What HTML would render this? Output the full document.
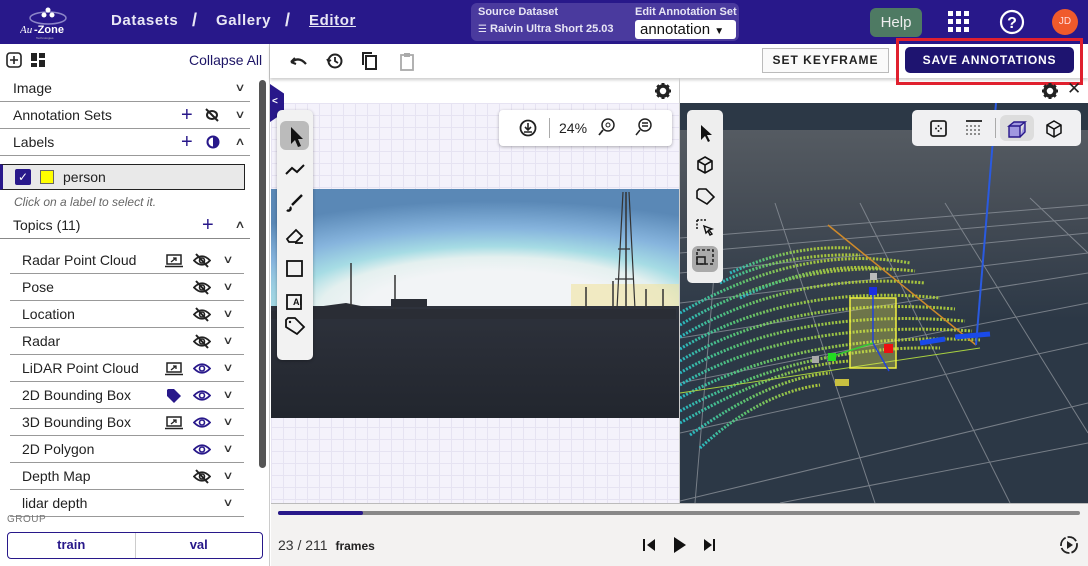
<!DOCTYPE html>
<html><head><meta charset="utf-8">
<style>
*{box-sizing:border-box;margin:0;padding:0}
body{width:1088px;height:566px;overflow:hidden;font-family:"Liberation Sans","DejaVu Sans",sans-serif;background:#fff;position:relative;color:#222}
.abs{position:absolute}
#hdr{left:0;top:0;width:1088px;height:44px;background:#28188a}
.nav{color:#e8e6f5;font-size:15px;font-weight:bold;letter-spacing:.6px;top:12px}
#side{left:0;top:44px;width:270px;height:522px;background:#fff;border-right:1px solid #ccc}
.row{position:absolute;left:0;width:250px;height:27px;border-bottom:1.5px solid #999;font-size:14px;line-height:26px;padding-left:13px}
.trow{position:absolute;left:10px;width:234px;height:27px;border-bottom:1.5px solid #999;font-size:14px;line-height:26px;padding-left:12px}
.chev{position:absolute;font-size:11px;color:#333;transform:scaleX(1.4)}
.ico{position:absolute}
</style></head><body>
<div id="hdr" class="abs">
  <div class="abs" style="left:20px;top:4px;width:52px;height:36px">
    <svg width="52" height="36"><ellipse cx="28" cy="14" rx="18" ry="6" fill="none" stroke="#8c86c8" stroke-width="1.5"/><circle cx="28" cy="6" r="2.5" fill="#fff"/><circle cx="24" cy="11" r="2.5" fill="#fff"/><circle cx="32" cy="11" r="2.5" fill="#fff"/>
    <text x="0" y="29" fill="#fff" font-size="11" font-style="italic" font-family="Liberation Serif">Au</text><text x="14" y="29" fill="#fff" font-size="11" font-weight="bold">-Zone</text><text x="16" y="35" fill="#bbb" font-size="3">Technologies</text></svg>
  </div>
  <div class="abs nav" style="left:111px">Datasets</div>
  <div class="abs nav" style="left:192px;font-size:18px;top:10px">/</div>
  <div class="abs nav" style="left:216px">Gallery</div>
  <div class="abs nav" style="left:285px;font-size:18px;top:10px">/</div>
  <div class="abs nav" style="left:309px;text-decoration:underline">Editor</div>
  <div class="abs" style="left:471px;top:3px;width:268px;height:38px;background:#4a3a9e;border-radius:6px"></div>
  <div class="abs" style="left:478px;top:6px;color:#e8e6f5;font-size:11px;font-weight:bold">Source Dataset</div>
  <div class="abs" style="left:478px;top:23px;color:#e8e6f5;font-size:11px;font-weight:bold"><span style="font-size:10px">&#9776;</span> Raivin Ultra Short 25.03</div>
  <div class="abs" style="left:635px;top:6px;color:#e8e6f5;font-size:11px;font-weight:bold">Edit Annotation Set</div>
  <div class="abs" style="left:635px;top:20px;width:101px;height:19px;background:#fff;border-radius:3px;font-size:15px;line-height:19px;padding-left:5px;color:#111">annotation <span style="font-size:10px">&#9660;</span></div>
  <div class="abs" style="left:870px;top:8px;width:52px;height:29px;background:#4e7a63;border-radius:6px;color:#eee;font-size:15px;line-height:29px;text-align:center">Help</div>
  <svg class="abs" style="left:948px;top:11px" width="22" height="22"><g fill="#fff"><rect x="0" y="0" width="5" height="5"/><rect x="8" y="0" width="5" height="5"/><rect x="16" y="0" width="5" height="5"/><rect x="0" y="8" width="5" height="5"/><rect x="8" y="8" width="5" height="5"/><rect x="16" y="8" width="5" height="5"/><rect x="0" y="16" width="5" height="5"/><rect x="8" y="16" width="5" height="5"/><rect x="16" y="16" width="5" height="5"/></g></svg>
  <svg class="abs" style="left:999px;top:9px" width="26" height="26"><circle cx="13" cy="13" r="11" fill="none" stroke="#fff" stroke-width="2.2"/><text x="13" y="19" text-anchor="middle" fill="#fff" font-size="16" font-weight="bold">?</text></svg>
  <div class="abs" style="left:1052px;top:9px;width:26px;height:26px;border-radius:13px;background:#f05a2c;color:#fdd;font-size:10px;line-height:26px;text-align:center">JD</div>
</div>

<div id="side" class="abs">
  <svg class="ico" style="left:6px;top:8px" width="40" height="16"><rect x="1" y="1" width="14" height="14" rx="3" fill="none" stroke="#222" stroke-width="1.6"/><path d="M8 4v8M4 8h8" stroke="#222" stroke-width="1.6"/><g fill="#222"><rect x="25" y="1" width="6" height="8"/><rect x="33" y="1" width="6" height="5"/><rect x="25" y="11" width="6" height="4"/><rect x="33" y="8" width="6" height="7"/></g></svg>
  <div class="abs" style="left:189px;top:8px;font-size:14px;color:#1d1566">Collapse All</div>
  <div class="abs" style="left:259px;top:36px;width:7px;height:388px;background:#555;border-radius:4px"></div>
  <div class="row" style="top:31px">Image<span class="chev" style="left:236px">&#8744;</span></div>
  <div class="row" style="top:58px">Annotation Sets<span style="position:absolute;left:181px;color:#28188a;font-size:20px">+</span><svg class="ico" style="left:205px;top:6px" width="14" height="14"><ellipse cx="7" cy="7" rx="5" ry="4" fill="none" stroke="#222" stroke-width="2"/><path d="M1 1l12 12" stroke="#222" stroke-width="2"/></svg><span class="chev" style="left:236px">&#8744;</span></div>
  <div class="row" style="top:85px">Labels<span style="position:absolute;left:181px;color:#28188a;font-size:20px">+</span><svg class="ico" style="left:206px;top:6px" width="14" height="14"><circle cx="7" cy="7" r="5.5" fill="none" stroke="#28188a" stroke-width="2"/><path d="M7 1.5a5.5 5.5 0 0 1 0 11z" fill="#28188a"/></svg><span class="chev" style="left:236px">&#8743;</span></div>
  <div class="abs" style="left:0;top:120px;width:245px;height:26px;background:#e9e9e9;border:1px solid #222;border-left:3px solid #28188a"></div>
  <div class="abs" style="left:15px;top:125px;width:16px;height:16px;background:#28188a;border-radius:2px;color:#fff;font-size:12px;line-height:16px;text-align:center">&#10003;</div>
  <div class="abs" style="left:40px;top:126px;width:14px;height:14px;background:#ffff00;border:1px solid #666"></div>
  <div class="abs" style="left:63px;top:125px;font-size:14px">person</div>
  <div class="abs" style="left:14px;top:151px;font-size:12px;font-style:italic;color:#666">Click on a label to select it.</div>
  <div class="row" style="top:168px;border-bottom-color:#888">Topics (11)<span style="position:absolute;left:202px;color:#28188a;font-size:20px">+</span><span class="chev" style="left:236px">&#8743;</span></div>
  <div id="topics"></div>
  <div class="abs" style="left:7px;top:470px;font-size:10px;color:#777;letter-spacing:.5px">GROUP</div>
  <div class="abs" style="left:7px;top:488px;width:256px;height:27px;border:1.5px solid #28188a;border-radius:4px;display:flex;font-size:13px;font-weight:bold;color:#28188a;line-height:24px;text-align:center">
    <div style="flex:1;border-right:1.5px solid #ccc">train</div><div style="flex:1">val</div></div>
</div>

<!-- toolbar -->
<div class="abs" style="left:270px;top:44px;width:818px;height:34px;background:#fff;box-shadow:0 2px 3px rgba(0,0,0,.2)"></div>
<svg class="abs" style="left:287px;top:50px" width="130" height="22">
 <path d="M4 12l4-4M4 12l5 2M5 12q7-6 14 2" fill="none" stroke="#222" stroke-width="2.2"/>
 <circle cx="48" cy="11" r="6.5" fill="none" stroke="#222" stroke-width="2"/><path d="M48 7v4l3 2M40 9l1.5 2.5 2.5-1.5" fill="none" stroke="#222" stroke-width="1.8"/>
 <rect x="79" y="6" width="10" height="13" fill="none" stroke="#222" stroke-width="2"/><path d="M76 15V3h9" fill="none" stroke="#222" stroke-width="2"/>
 <rect x="114" y="5" width="12" height="15" fill="none" stroke="#aaa" stroke-width="1.8"/><rect x="117" y="3" width="6" height="4" fill="#aaa"/>
</svg>
<div class="abs" style="left:762px;top:48px;width:127px;height:25px;border:1px solid #bbb;background:#fafafa;font-size:12px;font-weight:bold;letter-spacing:1px;line-height:23px;text-align:center;color:#222">SET KEYFRAME</div>
<div class="abs" style="left:905px;top:47px;width:169px;height:26px;background:#1e1470;border-radius:5px;font-size:12px;font-weight:bold;letter-spacing:.8px;line-height:26px;text-align:center;color:#fff">SAVE ANNOTATIONS</div>
<div class="abs" style="left:896px;top:38px;width:187px;height:47px;border:3px solid #e0202e"></div>

<!-- left viewer -->
<div class="abs" style="left:271px;top:103px;width:408px;height:400px;background-color:#f4f2fb;background-image:linear-gradient(#e6e3f2 1px,transparent 1px),linear-gradient(90deg,#e6e3f2 1px,transparent 1px);background-size:12px 12px"></div>
<svg class="abs" style="left:654px;top:82px" width="18" height="18"><circle cx="9" cy="9" r="5" fill="none" stroke="#222" stroke-width="3.5"/><g stroke="#222" stroke-width="3"><path d="M9 1v3M9 14v3M1 9h3M14 9h3M3.3 3.3l2 2M12.7 12.7l2 2M3.3 14.7l2-2M12.7 5.3l2-2"/></g></svg>
<div class="abs" style="left:270px;top:84px;width:14px;height:38px;background:#28188a;clip-path:polygon(0 0,100% 25%,100% 75%,0 100%)"></div>
<div class="abs" style="left:272px;top:96px;color:#fff;font-size:10px;font-weight:bold">&lt;</div>
<svg class="abs" style="left:271px;top:189px" width="408" height="229">
 <defs><radialGradient id="sky" cx="0.55" cy="1" r="0.9"><stop offset="0.35" stop-color="#f2f4f6"/><stop offset="0.48" stop-color="#e4f0ef"/><stop offset="0.58" stop-color="#a6dce4"/><stop offset="0.75" stop-color="#86b4dd"/><stop offset="1" stop-color="#5a88b6"/></radialGradient>
 <linearGradient id="gr" x1="0" y1="0" x2="0" y2="1"><stop offset="0" stop-color="#2e323c"/><stop offset="1" stop-color="#22262e"/></linearGradient></defs>
 <rect width="408" height="120" fill="url(#sky)"/>
 <rect x="300" y="95" width="108" height="25" fill="#f0e2a0" opacity=".6"/>
 <rect y="117" width="408" height="112" fill="url(#gr)"/>
 <path d="M0 122q20-3 45-4l30-4 30 6 50 0 250 0v10H0z" fill="#2a2d35"/>
 <g stroke="#333" stroke-width="1.5"><path d="M80 118V74M124 120V86M315 120V98M342 120V92M375 120V100M392 120V100M355 120V3"/></g>
 <path d="M352 3l-6 117M358 3l6 117M347 60h12M344 90h18" stroke="#333" stroke-width="1.2" fill="none"/>
 <rect x="120" y="110" width="36" height="8" fill="#2a2d35"/>
</svg>
<div class="abs" style="left:277px;top:110px;width:36px;height:250px;background:#f2f2f2;border-radius:5px;box-shadow:0 1px 3px rgba(0,0,0,.3)"></div>
<div class="abs" style="left:280px;top:121px;width:29px;height:29px;background:#bbb;border-radius:6px"></div>
<svg class="abs" style="left:281px;top:122px" width="28" height="230">
 <path d="M10 5v17l4-4 3 7 3-1-3-7h5z" fill="#111"/>
 <path d="M5 52l6-6 5 4 7-7" fill="none" stroke="#111" stroke-width="2"/>
 <path d="M21 73l-10 10M6 88a2 2 0 1 0 3-3" fill="none" stroke="#111" stroke-width="2.4"/>
 <path d="M6 117l9-9 6 6-6 6H8zM14 121h8" fill="none" stroke="#111" stroke-width="1.8"/>
 <rect x="6" y="139" width="15" height="15" fill="none" stroke="#111" stroke-width="1.8"/>
 <rect x="6" y="173" width="14" height="14" fill="none" stroke="#111" stroke-width="1.8"/><text x="12" y="183" font-size="9" font-weight="bold" fill="#111">AI</text>
 <path d="M5 205v-7l2-2h7l9 9-7 7z" fill="none" stroke="#111" stroke-width="1.8"/><circle cx="9" cy="200" r="1.2" fill="#111"/>
</svg>
<div class="abs" style="left:499px;top:110px;width:173px;height:36px;background:#fff;border-radius:4px;box-shadow:0 1px 3px rgba(0,0,0,.3)"></div>
<svg class="abs" style="left:518px;top:118px" width="20" height="20"><circle cx="10" cy="10" r="7.5" fill="none" stroke="#222" stroke-width="1.8"/><path d="M10 5v7M7 9l3 3 3-3M6 14h8" fill="none" stroke="#222" stroke-width="1.6"/></svg>
<div class="abs" style="left:549px;top:118px;width:1px;height:20px;background:#aaa"></div>
<div class="abs" style="left:559px;top:120px;font-size:14px;color:#222">24%</div>
<svg class="abs" style="left:597px;top:117px" width="60" height="20"><circle cx="11" cy="8" r="6" fill="none" stroke="#222" stroke-width="1.5"/><path d="M6 13l-4 5" stroke="#222" stroke-width="1.8"/><circle cx="11" cy="8" r="2" fill="none" stroke="#222"/>
<circle cx="48" cy="8" r="6" fill="none" stroke="#222" stroke-width="1.5"/><path d="M43 13l-4 5M45 6h6M45 9h6" stroke="#222" stroke-width="1.5"/></svg>

<!-- right viewer -->
<div class="abs" style="left:679px;top:78px;width:1px;height:425px;background:#ccc"></div>
<svg class="abs" style="left:1041px;top:82px" width="18" height="18"><circle cx="9" cy="9" r="5" fill="none" stroke="#222" stroke-width="3.5"/><g stroke="#222" stroke-width="3"><path d="M9 1v3M9 14v3M1 9h3M14 9h3M3.3 3.3l2 2M12.7 12.7l2 2M3.3 14.7l2-2M12.7 5.3l2-2"/></g></svg>
<div class="abs" style="left:1067px;top:79px;font-size:17px;color:#222">&#10005;</div>
<svg class="abs" style="left:680px;top:103px" width="408" height="400">
 <rect width="408" height="400" fill="#2c3846"/>
 <defs><linearGradient id="band" x1="0" y1="0" x2="0" y2="1"><stop offset="0" stop-color="#555b62"/><stop offset="0.4" stop-color="#464d56"/><stop offset="1" stop-color="#2c3846"/></linearGradient>
 <linearGradient id="pc" x1="0" y1="0" x2="0" y2="1"><stop offset="0" stop-color="#b8d43a"/><stop offset="0.5" stop-color="#5ad07a"/><stop offset="1" stop-color="#2ac6d0"/></linearGradient></defs>
 <rect y="27" width="408" height="190" fill="url(#band)"/>
 <g stroke="#8a9098" stroke-width="1" fill="none" opacity=".8">
  <path d="M0 200L408 150M0 235L408 170M0 280L408 200M0 330L408 240M0 398L408 300M100 400L408 340"/>
  <path d="M0 170L408 130M0 150L408 115M0 135L408 102"/>
  <path d="M95 100L195 400M180 100L330 400M265 100L408 330M40 100L15 400M350 95L408 150"/>
 </g>
 <g fill="none" stroke="url(#pc)" stroke-width="3" stroke-dasharray="2 1.5" opacity=".9">
  <path d="M0 210Q120 140 230 160"/><path d="M0 222Q110 155 235 168"/><path d="M0 234Q110 168 245 180"/><path d="M0 246Q110 180 260 195"/>
  <path d="M0 258Q110 192 275 206"/><path d="M0 270Q110 204 285 218"/><path d="M0 282Q110 216 292 228"/><path d="M0 295Q120 228 300 237"/>
  <path d="M0 308Q120 242 260 245"/><path d="M0 320Q100 262 170 258"/><path d="M10 332Q90 275 150 270"/><path d="M20 345Q80 290 140 282"/>
  <path d="M40 180Q100 150 180 152"/><path d="M60 195Q130 160 200 165"/><path d="M50 170Q110 142 170 145"/>
 </g>
 <path d="M148 122L296 242" stroke="#d08a2a" stroke-width="1.5"/>
 <path d="M296 242L316 0" stroke="#2a5ae0" stroke-width="2"/>
 <path d="M0 290L300 245" stroke="#a8d040" stroke-width="1"/>
 <rect x="170" y="195" width="46" height="70" fill="#e6e650" fill-opacity=".35" stroke="#f0f040" stroke-width="1.5"/>
 <path d="M193 185v55l16 28" stroke="#2244dd" stroke-width="1.5" fill="none"/><path d="M193 240l-40 13" stroke="#33cc33" stroke-width="1.5"/>
 <rect x="189" y="184" width="8" height="8" fill="#1a2ee0"/><rect x="204" y="241" width="9" height="9" fill="#ee1111"/><rect x="148" y="250" width="8" height="8" fill="#22dd22"/>
 <rect x="132" y="253" width="7" height="7" fill="#aaa"/><rect x="155" y="276" width="14" height="7" fill="#c8c040"/><rect x="190" y="170" width="7" height="7" fill="#bbb"/>
 <path d="M240 240l25-4M275 234l35-3" stroke="#1a4ae8" stroke-width="5"/>
</svg>
<div class="abs" style="left:687px;top:110px;width:36px;height:173px;background:#eee;border-radius:5px"></div>
<div class="abs" style="left:692px;top:246px;width:26px;height:26px;background:#aaa;border-radius:6px"></div>
<svg class="abs" style="left:692px;top:120px" width="28" height="150">
 <path d="M9 5v15l4-4 3 6 2-1-3-6h5z" fill="#111"/>
 <path d="M13 37l7 4v8l-7 4-7-4v-8zM6 41l7 4 7-4M13 45v8" fill="none" stroke="#111" stroke-width="1.6"/>
 <path d="M5 78v-7l2-2h7l8 8-7 7z" fill="none" stroke="#111" stroke-width="1.6"/>
 <path d="M5 100v10M5 100h10" stroke="#111" stroke-width="1.5" stroke-dasharray="2 1.5"/><path d="M12 106l8 3-3 1 3 4-2 1-2-4-2 2z" fill="none" stroke="#111" stroke-width="1.4"/>
 <rect x="5" y="130" width="16" height="14" fill="none" stroke="#222" stroke-width="1.6" stroke-dasharray="3 2"/><rect x="5" y="137" width="8" height="7" fill="none" stroke="#222" stroke-width="1.6"/>
</svg>
<div class="abs" style="left:912px;top:110px;width:169px;height:36px;background:#f0f0f2;border-radius:5px"></div>
<div class="abs" style="left:1000px;top:115px;width:34px;height:26px;background:#ddd;border-radius:6px"></div>
<div class="abs" style="left:995px;top:118px;width:1px;height:20px;background:#aaa"></div>
<svg class="abs" style="left:928px;top:118px" width="140" height="22">
 <rect x="3" y="3" width="15" height="15" rx="2" fill="none" stroke="#222" stroke-width="1.8"/><g fill="#222"><circle cx="10.5" cy="8" r="1"/><circle cx="10.5" cy="13" r="1"/><circle cx="8" cy="10.5" r="1"/><circle cx="13" cy="10.5" r="1"/></g>
 <path d="M38 3h16" stroke="#222" stroke-width="1.8"/><g fill="#444"><circle cx="39" cy="8" r=".9"/><circle cx="43" cy="8" r=".9"/><circle cx="47" cy="8" r=".9"/><circle cx="51" cy="8" r=".9"/><circle cx="39" cy="12" r=".9"/><circle cx="43" cy="12" r=".9"/><circle cx="47" cy="12" r=".9"/><circle cx="51" cy="12" r=".9"/><circle cx="39" cy="16" r=".9"/><circle cx="43" cy="16" r=".9"/><circle cx="47" cy="16" r=".9"/><circle cx="51" cy="16" r=".9"/></g>
 <path d="M81 8l5-4h11l-5 4zM81 8v11h11V8M97 4v10l-5 5" fill="#a098e0" stroke="#28188a" stroke-width="1.4"/>
 <path d="M126 3l7 4v8l-7 4-7-4V7zM119 7l7 4 7-4M126 11v8" fill="none" stroke="#111" stroke-width="1.5"/>
</svg>

<!-- bottom -->
<div class="abs" style="left:271px;top:503px;width:817px;height:63px;background:#f3f2f1;border-top:1px solid #bbb"></div>
<div class="abs" style="left:278px;top:511px;width:802px;height:4px;background:#888;border-radius:2px"></div>
<div class="abs" style="left:278px;top:511px;width:85px;height:4px;background:#28188a;border-radius:2px"></div>
<div class="abs" style="left:278px;top:537px;font-size:14px;color:#333">23 / 211 <span style="font-size:12px;font-weight:bold;color:#222;margin-left:4px">frames</span></div>
<svg class="abs" style="left:642px;top:535px" width="80" height="20"><path d="M2 4v12" stroke="#111" stroke-width="2"/><path d="M13 4v12l-8-6z" fill="#111"/><path d="M32 2v16l12-8z" fill="#111"/><path d="M62 4v12l8-6z" fill="#111"/><path d="M72 4v12" stroke="#111" stroke-width="2"/></svg>
<svg class="abs" style="left:1058px;top:534px" width="22" height="22"><circle cx="11" cy="11" r="8" fill="none" stroke="#222" stroke-width="1.8" stroke-dasharray="10 2"/><path d="M9 7v8l6-4z" fill="#222"/></svg>

<script>
var t=[["Radar Point Cloud",1,0],["Pose",0,0],["Location",0,0],["Radar",0,0],["LiDAR Point Cloud",1,1],["2D Bounding Box",2,1],["3D Bounding Box",1,1],["2D Polygon",0,1],["Depth Map",0,0],["lidar depth",0,-1]];
var h="";
t.forEach(function(r,i){
 var top=203+i*27;
 h+='<div class="trow" style="top:'+top+'px">'+r[0];
 if(r[1]==1)h+='<svg class="ico" style="left:155px;top:7px" width="18" height="14"><rect x="2" y="1" width="14" height="9" fill="none" stroke="#222" stroke-width="1.5"/><path d="M0 12.5h18" stroke="#222" stroke-width="1.5"/><path d="M6 8l5-4M8 4h3v3" stroke="#222" stroke-width="1.3" fill="none"/></svg>';
 if(r[1]==2)h+='<svg class="ico" style="left:156px;top:6px" width="16" height="16"><path d="M1 8V2l1-1h6l7 7-7 7z" fill="#28188a"/></svg>';
 if(r[2]==1)h+='<svg class="ico" style="left:183px;top:7px" width="18" height="13"><path d="M1 6.5Q9 -2 17 6.5Q9 15 1 6.5z" fill="none" stroke="#28188a" stroke-width="1.8"/><circle cx="9" cy="6.5" r="2.5" fill="none" stroke="#28188a" stroke-width="1.6"/></svg>';
 if(r[2]==0)h+='<svg class="ico" style="left:183px;top:6px" width="18" height="15"><path d="M1 7.5Q9 -1 17 7.5Q9 16 1 7.5z" fill="none" stroke="#222" stroke-width="1.8"/><circle cx="9" cy="7.5" r="2.5" fill="none" stroke="#222" stroke-width="1.6"/><path d="M3 1l12 13" stroke="#222" stroke-width="2"/></svg>';
 h+='<span class="chev" style="left:214px">&#8744;</span></div>';
});
document.getElementById("topics").innerHTML=h;
</script>
</body></html>
